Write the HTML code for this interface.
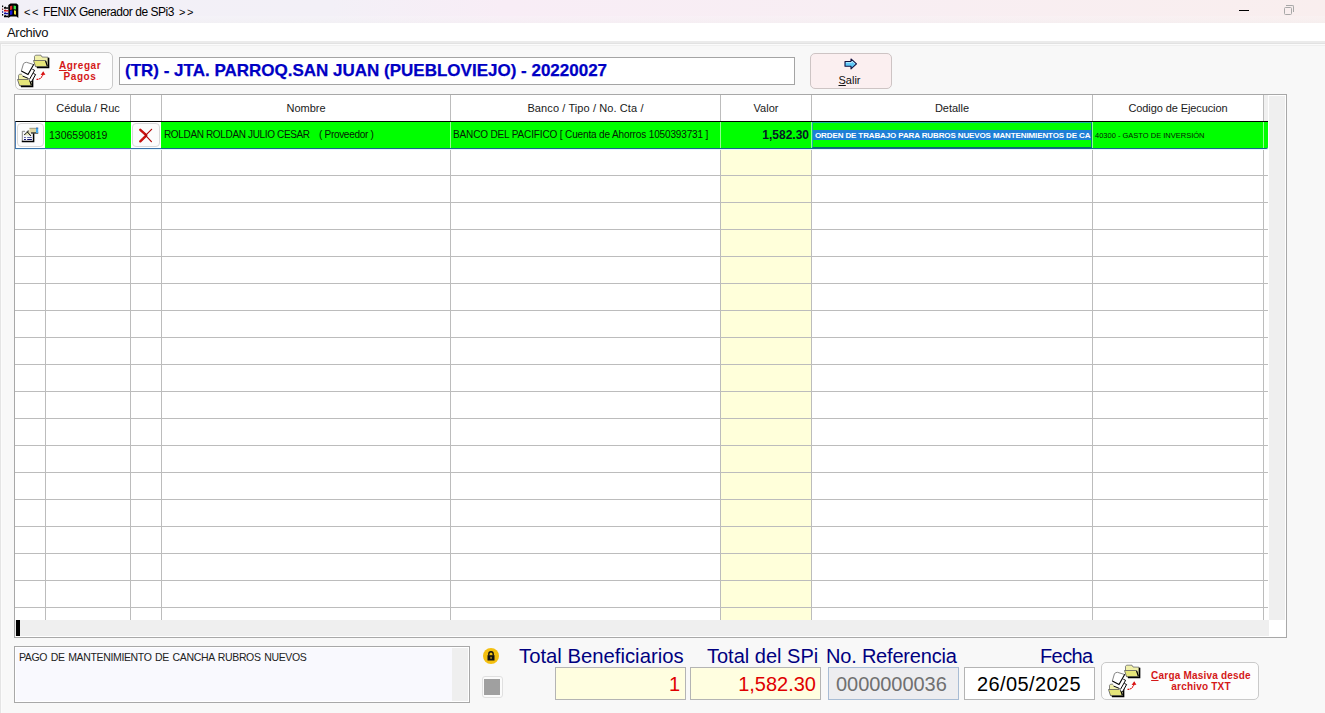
<!DOCTYPE html>
<html><head><meta charset="utf-8">
<style>
*{margin:0;padding:0;box-sizing:border-box}
html,body{width:1325px;height:713px;overflow:hidden;background:#f8f8f8;font-family:"Liberation Sans",sans-serif;position:relative}
.a{position:absolute}
.t{position:absolute;white-space:nowrap;line-height:1}
.btn{position:absolute;border:1px solid #c8c8c8;border-radius:5px;background:#fdfdfd}
.vl{position:absolute;width:1px;background:#bcbcbc}
.hl{position:absolute;height:1px;background:#bcbcbc}
.hd{position:absolute;top:102px;font-size:11px;color:#1a1a1a;text-align:center;white-space:nowrap;line-height:12px}
.lbl{position:absolute;white-space:nowrap;line-height:1;font-size:20px;color:#000080}
</style></head><body>
<!-- title bar -->
<div class="a" style="left:0;top:0;width:1325px;height:23px;background:linear-gradient(90deg,#f2f0f7 0%,#f3f0f7 25%,#f8edf6 38%,#f8eef3 65%,#f9eeee 100%)"></div>
<div class="a" style="left:0;top:16px;width:1325px;height:7px;background:linear-gradient(180deg,rgba(255,255,255,0.15),rgba(240,240,240,0.35))"></div>
<!-- menu -->
<div class="a" style="left:0;top:23px;width:1325px;height:18px;background:#fff"></div>
<div class="a" style="left:0;top:41px;width:1325px;height:2px;background:#ebebeb"></div>
<div class="a" style="left:0;top:43px;width:1325px;height:1px;background:#e2e2e2"></div>
<div class="a" style="left:0;top:44px;width:1325px;height:1px;background:#fbfbfb"></div>
<div class="a" style="left:0;top:45px;width:1325px;height:1px;background:#efefef"></div>
<div class="a" style="left:0;top:44px;width:1px;height:669px;background:#e4e4e4"></div>
<div class="a" style="left:1px;top:45px;width:1px;height:668px;background:#fbfbfb"></div>

<!-- app icon -->
<svg class="a" style="left:0;top:0" width="20" height="20" viewBox="0 0 20 20">
  <path d="M8.3 5 L10.5 3.6 L16.5 3.6 L18.3 5 L18.3 18 L16.5 16.5 L10.5 16.5 L8.3 18 Z" fill="#000"/>
  <path d="M10 6.2 L12.3 5.4 L12.3 9.6 L10 10 Z" fill="#e02828"/>
  <path d="M13.6 5.4 L16 6 L16 9.6 L13.6 9.2 Z" fill="#38e048"/>
  <path d="M10 10.8 L12.4 10.3 L12.4 14.6 L10 15 Z" fill="#1818d8"/>
  <path d="M14 10.2 L16 10.8 L16 14.8 L14 14.2 Z" fill="#f0e030"/>
  <rect x="2" y="5.5" width="1.2" height="1.6" fill="#000"/>
  <rect x="2" y="8.5" width="1.2" height="1.6" fill="#7a3030"/>
  <rect x="2" y="11.2" width="1.2" height="1.6" fill="#202090"/>
  <rect x="2" y="14" width="1.2" height="1.6" fill="#000"/>
  <path d="M4 7.2 L5.5 6.6 L6.5 7.4 L8.5 7.2 L8.5 8.7 L4 8.7 Z" fill="#000"/>
  <path d="M4 10 L5.5 9.5 L6.5 10.2 L8.5 10 L8.5 11.5 L4 11.5 Z" fill="#d01010"/>
  <path d="M4 12.8 L5.5 12.3 L6.5 13 L8.5 12.8 L8.5 14.2 L4 14.2 Z" fill="#1010a0"/>
  <path d="M4 15.6 L5.5 15.1 L6.5 15.8 L8.5 15.6 L8.5 17.2 L4 17.2 Z" fill="#000"/>
</svg>
<div class="t" style="left:24px;top:7px;font-size:11px;color:#000">&lt;</div>
<div class="t" style="left:32px;top:7px;font-size:11px;color:#000">&lt;</div>
<div class="t" style="left:43px;top:6px;font-size:12px;letter-spacing:-0.45px;color:#000">FENIX Generador de SPi3</div>
<div class="t" style="left:179px;top:7px;font-size:11px;color:#000">&gt;</div>
<div class="t" style="left:187px;top:7px;font-size:11px;color:#000">&gt;</div>
<div class="t" style="left:7px;top:26px;font-size:13px;letter-spacing:-0.3px;color:#111">Archivo</div>
<!-- window controls -->
<div class="a" style="left:1239px;top:10px;width:10px;height:1px;background:#000"></div>
<div class="a" style="left:1284px;top:7px;width:8px;height:8px;border:1px solid #a8a8a8;border-radius:1.5px"></div>
<div class="a" style="left:1286px;top:5px;width:8px;height:7px;border-top:1px solid #a8a8a8;border-right:1px solid #a8a8a8;border-radius:0 2px 0 0"></div>

<!-- Agregar Pagos button -->
<div class="btn" style="left:15px;top:52px;width:98px;height:38px;border-color:#cacaca"></div>
<svg class="a ico" style="left:15px;top:52px" width="36" height="37" viewBox="0 0 36 37">
  <defs><g id="fold">
  <path d="M19.5 8.5 L19.5 4.3 L20.5 3.2 L26 3.2 L27 5 L33 5.2 L33 15 L21 15 Z" fill="#f0f0aa" stroke="#6a6a6a" stroke-width="0.8"/>
  <path d="M18.5 8.5 L30.5 8.5 L32.5 14.6 L20.5 14.6 Z" fill="#e6e67a" stroke="#5a5a5a" stroke-width="0.8"/>
  <path d="M30.6 8.8 L32.3 14" stroke="#000" stroke-width="1.1"/>
  <path d="M33.6 5.8 L33.6 15.5 L22 15.5" fill="none" stroke="#000" stroke-width="1.5"/>
  </g>
  <g id="pap">
  <path d="M6.3 19 L8.5 11.6 Q10 10.3 11.5 10.3 L18.5 12.5 L19.5 17.5 L20.5 22.5 L16.5 30 L13 27 L7.5 24 Z" fill="#fff"/>
  <path d="M6.3 19 L8.5 11.6 Q10 10.3 11.5 10.3 L18.5 12.5" fill="none" stroke="#777" stroke-width="0.9"/>
  <path d="M18.8 12.3 L13 22.5 L6.3 19" fill="none" stroke="#000" stroke-width="1.1"/>
  <path d="M17.4 17.3 L19.6 18.3 L14.4 27.5" fill="none" stroke="#000" stroke-width="1"/>
  <path d="M18.4 21.5 L20.6 22.5 L16.4 30" fill="none" stroke="#000" stroke-width="1"/>
  <path d="M7.5 24 L13.5 26.5" fill="none" stroke="#000" stroke-width="1"/>
  <path d="M21.5 27.4 Q26.5 27.5 28 22" fill="none" stroke="#d81010" stroke-width="1.2" stroke-dasharray="1.8 0.7"/>
  <path d="M25.6 23 L28.2 19.2 L30.4 22.8 Z" fill="#d81010"/>
  </g></defs>
  <use href="#fold"/>
  <use href="#fold" x="-16" y="19"/>
  <use href="#pap"/>
</svg>
<div class="t" style="left:58px;top:60px;width:44px;text-align:center;font-size:10px;font-weight:bold;letter-spacing:0.55px;color:#d41818;line-height:11px"><u>A</u>gregar<br>Pagos</div>

<!-- title textbox -->
<div class="a" style="left:119px;top:57px;width:676px;height:28px;border:1px solid #a4a4a4;background:#fff"></div>
<div class="t" style="left:125px;top:62px;font-size:17px;font-weight:bold;color:#0000c4;-webkit-text-stroke:0.25px #0000c4">(TR) - JTA. PARROQ.SAN JUAN (PUEBLOVIEJO) - 20220027</div>

<!-- Salir -->
<div class="btn" style="left:810px;top:53px;width:82px;height:36px;background:#fbeff0;border-color:#cdc4c4"></div>
<svg class="a" style="left:844px;top:58px" width="14" height="12" viewBox="0 0 14 12">
  <path d="M1 3.5 L7 3.5 L7 1 L12.5 5.8 L7 10.8 L7 8.3 L1 8.3 Z" fill="#5ec8f8" stroke="#101040" stroke-width="1.1" stroke-linejoin="round"/>
  <path d="M2 4.6 L8 4.6 L8 3 L11 5.8" fill="none" stroke="#c8f0ff" stroke-width="0.8"/>
</svg>
<div class="t" style="left:810px;top:75px;width:79px;text-align:center;font-size:11px;color:#111"><u>S</u>alir</div>

<!-- grid -->
<div class="a" style="left:14px;top:94px;width:1273px;height:544px;border:1px solid #a8a8a8;background:#fff"></div>
<!--GRID-->
<div class="a" style="left:721px;top:149px;width:90px;height:471px;background:#ffffda"></div>
<div class="a" style="left:1264px;top:95px;width:4px;height:26px;background:#f0f0f0"></div>
<div class="vl" style="left:45px;top:95px;height:525px"></div>
<div class="vl" style="left:130px;top:95px;height:525px"></div>
<div class="vl" style="left:161px;top:95px;height:525px"></div>
<div class="vl" style="left:450px;top:95px;height:525px"></div>
<div class="vl" style="left:720px;top:95px;height:525px"></div>
<div class="vl" style="left:811px;top:95px;height:525px"></div>
<div class="vl" style="left:1092px;top:95px;height:525px"></div>
<div class="vl" style="left:1263px;top:95px;height:525px"></div>
<div class="hl" style="left:15px;top:175px;width:1253px"></div>
<div class="hl" style="left:15px;top:202px;width:1253px"></div>
<div class="hl" style="left:15px;top:229px;width:1253px"></div>
<div class="hl" style="left:15px;top:256px;width:1253px"></div>
<div class="hl" style="left:15px;top:283px;width:1253px"></div>
<div class="hl" style="left:15px;top:310px;width:1253px"></div>
<div class="hl" style="left:15px;top:337px;width:1253px"></div>
<div class="hl" style="left:15px;top:364px;width:1253px"></div>
<div class="hl" style="left:15px;top:391px;width:1253px"></div>
<div class="hl" style="left:15px;top:418px;width:1253px"></div>
<div class="hl" style="left:15px;top:445px;width:1253px"></div>
<div class="hl" style="left:15px;top:472px;width:1253px"></div>
<div class="hl" style="left:15px;top:499px;width:1253px"></div>
<div class="hl" style="left:15px;top:526px;width:1253px"></div>
<div class="hl" style="left:15px;top:553px;width:1253px"></div>
<div class="hl" style="left:15px;top:580px;width:1253px"></div>
<div class="hl" style="left:15px;top:607px;width:1253px"></div>
<div class="a" style="left:1269px;top:96px;width:16px;height:524px;background:#efefef"></div>
<div class="a" style="left:15px;top:620px;width:1254px;height:16px;background:#efefef"></div>
<div class="a" style="left:16px;top:620px;width:4px;height:16px;background:#000"></div>

<div class="hd" style="left:46px;width:84px">Cédula / Ruc</div>
<div class="hd" style="left:162px;width:288px">Nombre</div>
<div class="hd" style="left:451px;width:269px;letter-spacing:0.1px">Banco / Tipo / No. Cta /</div>
<div class="hd" style="left:721px;width:90px">Valor</div>
<div class="hd" style="left:812px;width:280px">Detalle</div>
<div class="hd" style="left:1093px;width:170px;letter-spacing:-0.1px">Codigo de Ejecucion</div>

<div class="a" style="left:15px;top:121px;width:1253px;height:28px;background:#00ff00;border-top:1px solid #000;border-bottom:1px solid #16688a;border-left:1px solid #4a7cb4;border-radius:0 0 2px 0"></div>
<div class="a" style="left:16px;top:122px;width:29px;height:26px;background:#fff"></div>
<div class="a" style="left:131px;top:122px;width:30px;height:26px;background:#fff"></div>
<div class="a" style="left:15px;top:148px;width:146px;height:1px;background:#3a72aa"></div>
<div class="a" style="left:15px;top:149px;width:1253px;height:1px;background:#e6f6fc"></div>
<div class="a" style="left:450px;top:122px;width:1px;height:26px;background:#90ff90"></div>
<div class="a" style="left:720px;top:122px;width:1px;height:26px;background:#90ff90"></div>
<div class="a" style="left:811px;top:122px;width:1px;height:26px;background:#90ff90"></div>
<div class="a" style="left:1263px;top:122px;width:1px;height:26px;background:#90ff90"></div>
<div class="a" style="left:1092px;top:122px;width:1px;height:26px;background:#90ff90"></div>
<div class="a" style="left:812px;top:122px;width:280px;height:26px;border:1px solid #18b0a0;border-bottom-color:#0a6a70;border-right-color:#0a7a80"></div>
<div class="a" style="left:813px;top:130px;width:278px;height:10px;background:#1e7fd6"></div>

<div class="btn" style="left:17px;top:123px;width:27px;height:24px;border-color:#d8d8d8;border-radius:4px;background:#fcfcfc"></div>
<div class="btn" style="left:132px;top:123px;width:28px;height:24px;border-color:#d8d8d8;border-radius:4px;background:#fcfcfc"></div>
<svg class="a" style="left:21px;top:127px" width="18" height="16" viewBox="0 0 18 16">
  <rect x="1" y="4.2" width="12" height="10.3" fill="#f6f6fa"/>
  <path d="M1.3 14.5 L1.3 4.3 L4 4.3" fill="none" stroke="#7a7a7a" stroke-width="0.9"/>
  <path d="M12.6 6.5 L12.6 14.6 L0.8 14.6" fill="none" stroke="#000" stroke-width="1.5"/>
  <rect x="3" y="10" width="1.9" height="1" fill="#6068a8"/><rect x="6.2" y="10" width="4.7" height="1" fill="#6068a8"/>
  <rect x="3" y="12" width="1.9" height="1" fill="#101070"/><rect x="6.2" y="12" width="4.7" height="1" fill="#101070"/>
  <path d="M3.2 8 L7.8 3.2 L10.2 8.8 Z" fill="#e4e4b8"/>
  <path d="M3.4 7.8 L7.8 3.4" stroke="#000" stroke-width="1.1" stroke-dasharray="1 0.5"/>
  <path d="M6.4 4.8 L9.8 8.8" stroke="#000" stroke-width="1.1" stroke-dasharray="1 0.5"/>
  <rect x="8.5" y="1.2" width="6.5" height="4.6" fill="#ddd4a2"/>
  <path d="M8.5 1.3 L15 1.3" stroke="#8a8a70" stroke-width="0.8"/>
  <path d="M10 6 L17.2 6" stroke="#000" stroke-width="1.1"/>
  <rect x="15" y="1" width="2.2" height="5" fill="#44a8f0"/>
  <rect x="15" y="0.6" width="2.2" height="0.8" fill="#2a4a90"/>
</svg>
<svg class="a" style="left:138px;top:128px" width="16" height="15" viewBox="0 0 16 15">
  <path d="M2.3 1.8 L8.2 7.2 M2.3 13.3 L8.2 7.6" stroke="#c40808" stroke-width="2.4" stroke-linecap="round"/>
  <path d="M2.6 2.3 L6.5 5.8 M2.6 12.8 L6.5 9" stroke="#f05030" stroke-width="0.7" stroke-dasharray="0.8 0.8"/>
  <path d="M7.8 7.2 L13.6 1.3 M7.8 7.6 L13.4 13.6" stroke="#b00808" stroke-width="1.2" stroke-linecap="round"/>
</svg>

<div class="t" style="left:49px;top:130px;font-size:10.5px;color:#062006">1306590819</div>
<div class="t" style="left:164px;top:130px;font-size:10px;letter-spacing:-0.35px;color:#062006">ROLDAN ROLDAN JULIO CESAR</div>
<div class="t" style="left:319px;top:130px;font-size:10px;letter-spacing:-0.3px;color:#062006">( Proveedor )</div>
<div class="t" style="left:453px;top:130px;font-size:10px;letter-spacing:-0.14px;color:#062006">BANCO DEL PACIFICO [ Cuenta de Ahorros 1050393731 ]</div>
<div class="t" style="left:721px;top:129px;width:88px;text-align:right;font-size:12px;font-weight:bold;color:#061a26">1,582.30</div>
<div class="a" style="left:813px;top:128px;width:278px;height:14px;overflow:hidden"><div class="t" style="left:2px;top:4px;font-size:8px;font-weight:bold;letter-spacing:-0.12px;color:#fff">ORDEN DE TRABAJO PARA RUBROS NUEVOS MANTENIMIENTOS DE CA</div></div>
<div class="t" style="left:1095px;top:132px;font-size:7.5px;color:#062006">40300 - GASTO DE INVERSIÓN</div>

<!--ENDGRID-->

<!-- bottom memo -->
<div class="a" style="left:14px;top:646px;width:456px;height:57px;border:1px solid #a8a8a8;background:#fff"></div>
<div class="a" style="left:16px;top:648px;width:436px;height:53px;background:#f9f9fe"></div>
<div class="a" style="left:452px;top:648px;width:16px;height:53px;background:#efefef"></div>
<div class="t" style="left:19px;top:652px;font-size:10.5px;letter-spacing:-0.35px;word-spacing:1px;color:#222">PAGO DE MANTENIMIENTO DE CANCHA RUBROS NUEVOS</div>

<!-- lock + square -->
<div class="a" style="left:483px;top:648px;width:16px;height:16px;border-radius:50%;background:#f4c010"></div>
<svg class="a" style="left:483px;top:648px" width="16" height="16" viewBox="0 0 16 16">
  <path d="M5.8 7.5 L5.8 6 Q5.8 3.8 8 3.8 Q10.2 3.8 10.2 6 L10.2 7.5" fill="none" stroke="#111" stroke-width="1.4"/>
  <rect x="4.5" y="7.2" width="7" height="5.3" fill="#111"/>
  <rect x="7.4" y="8.8" width="1.3" height="2" fill="#c8a020"/>
</svg>
<div class="a" style="left:482px;top:676px;width:21px;height:22px;border:1px solid #e0e0e0;border-radius:3px;background:#fbfbfb"></div>
<div class="a" style="left:484px;top:679px;width:16px;height:16px;background:#a0a0a0"></div>

<div class="lbl" style="left:519px;top:646px;font-size:20.3px">Total Beneficiarios</div>
<div class="lbl" style="left:707px;top:646px">Total del SPi</div>
<div class="lbl" style="left:826px;top:646px;letter-spacing:-0.2px">No. Referencia</div>
<div class="lbl" style="left:1040px;top:646px;letter-spacing:-0.6px">Fecha</div>

<div class="a" style="left:555px;top:667px;width:131px;height:33px;border:1px solid #b4b4b4;background:#fffee0"></div>
<div class="t" style="left:555px;top:674px;width:125px;text-align:right;font-size:20px;color:#e00000">1</div>
<div class="a" style="left:690px;top:667px;width:131px;height:33px;border:1px solid #b4b4b4;background:#fffee0"></div>
<div class="t" style="left:690px;top:674px;width:126px;text-align:right;font-size:20px;color:#e00000">1,582.30</div>
<div class="a" style="left:828px;top:667px;width:131px;height:33px;border:1px solid #a8bcd4;background:#ededf0"></div>
<div class="t" style="left:836px;top:674px;font-size:20px;letter-spacing:-0.05px;color:#707070">0000000036</div>
<div class="a" style="left:964px;top:667px;width:131px;height:33px;border:1px solid #b4b4b4;background:#fff"></div>
<div class="t" style="left:977px;top:674px;font-size:20px;letter-spacing:0.4px;color:#000">26/05/2025</div>

<!-- Carga masiva -->
<div class="btn" style="left:1101px;top:662px;width:158px;height:38px;border-color:#cacaca"></div>
<svg class="a" style="left:1106px;top:662px" width="36" height="37" viewBox="0 0 36 37">
  <use href="#fold"/>
  <use href="#fold" x="-16" y="19"/>
  <use href="#pap"/>
</svg>
<div class="t" style="left:1145px;top:670px;width:112px;text-align:center;font-size:10px;font-weight:bold;letter-spacing:0.2px;color:#d41818;line-height:11px"><u>C</u>arga Masiva desde<br>archivo TXT</div>
</body></html>
